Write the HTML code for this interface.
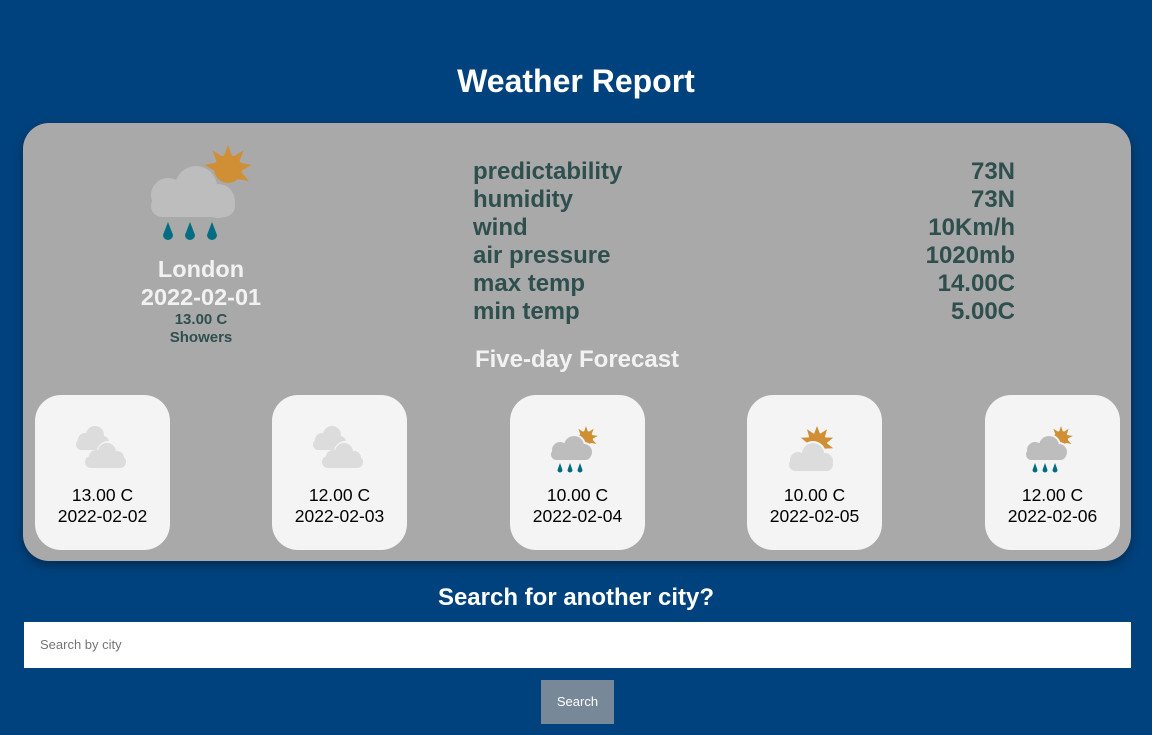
<!DOCTYPE html>
<html><head><meta charset="utf-8"><style>
body{margin:0;background:#00427d;font-family:"Liberation Sans",Arial,sans-serif;width:1152px;height:735px;overflow:hidden;position:relative}
h1{position:absolute;top:63px;left:0;width:1152px;text-align:center;margin:0;color:#fff;font-size:32px;font-weight:bold}
.panel{position:absolute;left:23px;top:123px;width:1108px;height:438px;background:#a9a9a9;border-radius:26px;box-shadow:0 4px 10px rgba(0,0,0,.35)}
.abs{position:absolute}
.city{position:absolute;left:78px;width:200px;text-align:center;font-weight:bold}
.stats{position:absolute;left:450px;top:35px;width:542px;color:#2f4f4f;font-weight:bold;font-size:24px;line-height:28px}
.stats div{display:flex;justify-content:space-between}
.card{position:absolute;top:272px;width:135px;height:155px;background:#f4f4f4;border-radius:26px;text-align:center;font-size:17.5px;line-height:21px;color:#000}
.card .t{position:absolute;top:90px;width:100%}
.card svg{position:absolute;left:38px;top:28px}
h2{position:absolute;top:584px;left:0;width:1152px;text-align:center;margin:0;color:#fff;font-size:24px}
.inp{position:absolute;left:24px;top:622px;width:1107px;height:46px;background:#fff;font-size:13px;color:#757575;line-height:46px;text-indent:16px}
.btn{position:absolute;left:541px;top:680px;width:73px;height:44px;background:#778899;color:#fff;font-size:13px;text-align:center;line-height:44px}
</style></head><body>
<h1>Weather Report</h1>
<div class="panel">
<svg class="abs" style="left:125px;top:20px" width="110" height="105" viewBox="0 0 110 105">
 <g fill="#d08f35" transform="translate(80,26)">
  <circle r="14"/>
  <polygon points="-4,-13 0,-24 4,-13"/><polygon points="-4,-13 0,-24 4,-13" transform="rotate(40)"/><polygon points="-4,-13 0,-24 4,-13" transform="rotate(80)"/><polygon points="-4,-13 0,-24 4,-13" transform="rotate(120)"/><polygon points="-4,-13 0,-24 4,-13" transform="rotate(-40)"/><polygon points="-4,-13 0,-24 4,-13" transform="rotate(-80)"/>
 </g>
 <g fill="#a9a9a9"><circle cx="48" cy="44" r="23"/><circle cx="70" cy="58" r="19"/></g>
 <g fill="#bdbdbd"><circle cx="20" cy="52" r="17"/><circle cx="48" cy="44" r="21"/><circle cx="70" cy="58" r="17"/><rect x="3" y="52" width="84" height="22" rx="11"/></g>
 <g fill="#006d82"><path d="M20 79 l-5 13 a5 5 0 0 0 10 0z"/><path d="M42 79 l-5 13 a5 5 0 0 0 10 0z"/><path d="M64 79 l-5 13 a5 5 0 0 0 10 0z"/></g>
</svg>
<div class="city" style="top:132px;color:#f2f2f2;font-size:23.5px;line-height:28px">London<br>2022-02-01</div>
<div class="city" style="top:188px;color:#2f4f4f;font-size:15px;line-height:18px">13.00 C<br>Showers</div>
<div class="stats"><div><span>predictability</span><span>73N</span></div><div><span>humidity</span><span>73N</span></div><div><span>wind</span><span>10Km/h</span></div><div><span>air pressure</span><span>1020mb</span></div><div><span>max temp</span><span>14.00C</span></div><div><span>min temp</span><span>5.00C</span></div></div>
<div class="abs" style="left:0;width:1108px;top:223px;text-align:center;color:#f2f2f2;font-weight:bold;font-size:24px">Five-day Forecast</div>

<div class="card" style="left:12px"><svg width="60" height="55" viewBox="0 0 60 55"><g fill="#dcdcdc"><circle cx="12" cy="17" r="7"/><circle cx="22" cy="12" r="9"/><circle cx="30" cy="19" r="6"/><rect x="3" y="16" width="33" height="11" rx="5.5"/></g><g fill="#f4f4f4"><circle cx="35" cy="29" r="11"/></g><g fill="#dcdcdc"><circle cx="23" cy="34" r="7"/><circle cx="34" cy="29" r="9"/><circle cx="44" cy="35" r="7"/><rect x="12" y="33" width="41" height="12" rx="6"/></g></svg><div class="t">13.00 C<br>2022-02-02</div></div>
<div class="card" style="left:249px"><svg width="60" height="55" viewBox="0 0 60 55"><g fill="#dcdcdc"><circle cx="12" cy="17" r="7"/><circle cx="22" cy="12" r="9"/><circle cx="30" cy="19" r="6"/><rect x="3" y="16" width="33" height="11" rx="5.5"/></g><g fill="#f4f4f4"><circle cx="35" cy="29" r="11"/></g><g fill="#dcdcdc"><circle cx="23" cy="34" r="7"/><circle cx="34" cy="29" r="9"/><circle cx="44" cy="35" r="7"/><rect x="12" y="33" width="41" height="12" rx="6"/></g></svg><div class="t">12.00 C<br>2022-02-03</div></div>

<div class="card" style="left:487px"><svg width="60" height="55" viewBox="0 0 60 55"><g fill="#d08f35" transform="translate(38,15)"><circle r="7"/><polygon points="-2,-6 0,-12 2,-6"/><polygon points="-2,-6 0,-12 2,-6" transform="rotate(40)"/><polygon points="-2,-6 0,-12 2,-6" transform="rotate(80)"/><polygon points="-2,-6 0,-12 2,-6" transform="rotate(120)"/><polygon points="-2,-6 0,-12 2,-6" transform="rotate(-40)"/><polygon points="-2,-6 0,-12 2,-6" transform="rotate(-80)"/></g><g fill="#f4f4f4"><circle cx="26" cy="23" r="12"/><circle cx="36" cy="29" r="10"/></g><g fill="#bdbdbd"><circle cx="12" cy="27" r="8"/><circle cx="26" cy="23" r="10"/><circle cx="36" cy="29" r="8"/><rect x="3" y="26" width="40" height="11" rx="5.5"/></g><g fill="#006d82"><path d="M12 40 l-2.5 7 a2.5 2.5 0 0 0 5 0z"/><path d="M22 40 l-2.5 7 a2.5 2.5 0 0 0 5 0z"/><path d="M32 40 l-2.5 7 a2.5 2.5 0 0 0 5 0z"/></g></svg><div class="t">10.00 C<br>2022-02-04</div></div>

<div class="card" style="left:724px"><svg width="60" height="55" viewBox="0 0 60 55"><g fill="#d08f35" transform="translate(32,20)"><circle r="10"/><polygon points="-3,-9 0,-17 3,-9"/><polygon points="-3,-9 0,-17 3,-9" transform="rotate(36)"/><polygon points="-3,-9 0,-17 3,-9" transform="rotate(72)"/><polygon points="-3,-9 0,-17 3,-9" transform="rotate(108)"/><polygon points="-3,-9 0,-17 3,-9" transform="rotate(-36)"/><polygon points="-3,-9 0,-17 3,-9" transform="rotate(-72)"/><polygon points="-3,-9 0,-17 3,-9" transform="rotate(-108)"/></g><g fill="#f4f4f4"><circle cx="28" cy="31" r="13"/></g><g fill="#dcdcdc"><circle cx="13" cy="37" r="8"/><circle cx="28" cy="31" r="11"/><circle cx="40" cy="38" r="8"/><rect x="4" y="35" width="44" height="13" rx="6.5"/></g></svg><div class="t">10.00 C<br>2022-02-05</div></div>

<div class="card" style="left:962px"><svg width="60" height="55" viewBox="0 0 60 55"><g fill="#d08f35" transform="translate(38,15)"><circle r="7"/><polygon points="-2,-6 0,-12 2,-6"/><polygon points="-2,-6 0,-12 2,-6" transform="rotate(40)"/><polygon points="-2,-6 0,-12 2,-6" transform="rotate(80)"/><polygon points="-2,-6 0,-12 2,-6" transform="rotate(120)"/><polygon points="-2,-6 0,-12 2,-6" transform="rotate(-40)"/><polygon points="-2,-6 0,-12 2,-6" transform="rotate(-80)"/></g><g fill="#f4f4f4"><circle cx="26" cy="23" r="12"/><circle cx="36" cy="29" r="10"/></g><g fill="#bdbdbd"><circle cx="12" cy="27" r="8"/><circle cx="26" cy="23" r="10"/><circle cx="36" cy="29" r="8"/><rect x="3" y="26" width="40" height="11" rx="5.5"/></g><g fill="#006d82"><path d="M12 40 l-2.5 7 a2.5 2.5 0 0 0 5 0z"/><path d="M22 40 l-2.5 7 a2.5 2.5 0 0 0 5 0z"/><path d="M32 40 l-2.5 7 a2.5 2.5 0 0 0 5 0z"/></g></svg><div class="t">12.00 C<br>2022-02-06</div></div>
</div>
<h2>Search for another city?</h2>
<div class="inp">Search by city</div>
<div class="btn">Search</div>
</body></html>
